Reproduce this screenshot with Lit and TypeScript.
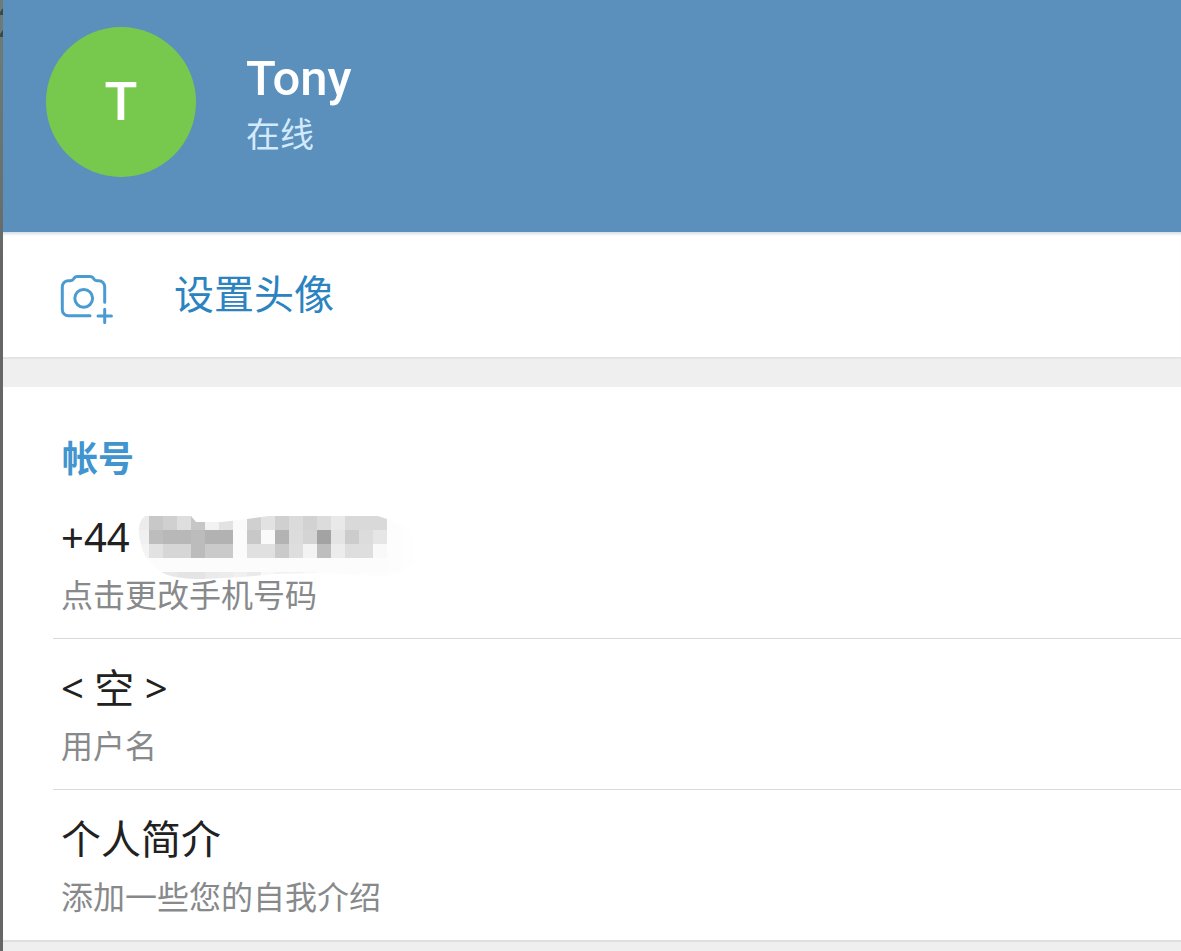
import { LitElement, html, css, svg } from "lit";
import { customElement, state } from "lit/decorators.js";

interface Entry {
  value: string;
  label: string;
  masked?: boolean;
}

const CELL = 14;

// Grey level of each mosaic cell, row by row; 255 is left blank.
const MOSAIC: number[][] = [
  [236, 200, 208, 222, 198, 242, 226, 250, 208, 226, 208, 219, 210, 220, 233, 217, 217, 217, 253, 254],
  [240, 189, 184, 184, 188, 178, 178, 251, 200, 250, 179, 220, 212, 163, 228, 204, 220, 230, 253, 254],
  [244, 226, 214, 214, 188, 202, 202, 251, 224, 224, 202, 222, 243, 190, 236, 222, 222, 249, 253, 254],
  [253, 252, 252, 252, 252, 252, 252, 252, 252, 252, 252, 252, 252, 252, 252, 252, 252, 252, 253, 254],
  [255, 236, 232, 228, 228, 234, 236, 240, 234, 248, 242, 242, 246, 252, 252, 252, 253, 253, 254, 255],
];

@customElement("app-root")
export class AppRoot extends LitElement {
  static styles = css`
    :host {
      display: flex;
      min-height: 100vh;
      background: #efefef;
      font-family: "Noto Sans", "Noto Sans CJK SC", sans-serif;
      color: #212121;
    }
    .edge {
      flex: none;
      width: 3px;
      background: linear-gradient(#6c7c7b, #67716e 200px, #666 260px);
    }
    .edge svg {
      display: block;
    }
    .page {
      flex: 1;
      min-width: 0;
    }
    button {
      display: block;
      width: 100%;
      margin: 0;
      border: 0;
      background: none;
      font: inherit;
      color: inherit;
      text-align: left;
      cursor: pointer;
    }
    .header {
      display: flex;
      align-items: flex-start;
      gap: 50px;
      padding: 27px 43px 55px;
      background: #5b8fbc;
      color: #fff;
    }
    .avatar {
      flex: none;
      display: grid;
      place-items: center;
      width: 150px;
      height: 150px;
      border-radius: 50%;
      background: #77c94d;
      font: 500 54px/64px Roboto, sans-serif;
    }
    .who {
      padding-top: 22px;
    }
    .name {
      margin: 0;
      font: 500 49px/60px Roboto, sans-serif;
    }
    .status {
      margin: 0;
      font-size: 34px;
      line-height: 50px;
      color: #d2eafc;
    }
    .card {
      background: #fff;
    }
    .action {
      border-bottom: 2px solid #e4e4e4;
      box-shadow: inset 0 4px 3px -2px #d3dde6;
    }
    .action button {
      display: flex;
      align-items: center;
      gap: 58px;
      padding: 32px 57px 33px;
      font-size: 40px;
      line-height: 60px;
      color: #2b83c0;
    }
    .camera {
      flex: none;
      width: 56px;
      height: 60px;
      fill: none;
      stroke: #4a9bd1;
      stroke-width: 3;
      stroke-linecap: round;
      stroke-linejoin: round;
    }
    .account {
      margin-top: 28px;
      padding-top: 44px;
      border-bottom: 2px solid #dfdfdf;
    }
    .title {
      margin: 0;
      padding-left: 59px;
      font-size: 36px;
      line-height: 56px;
      font-weight: 700;
      color: #4094cf;
    }
    .list {
      margin: 0;
      padding: 1px 0 0 50px;
      list-style: none;
    }
    .item + .item {
      border-top: 1px solid #d9d9d9;
    }
    .item button {
      padding: 21px 8px;
    }
    .value {
      display: flex;
      gap: 5px;
      font-size: 40px;
      line-height: 56px;
    }
    .label {
      display: block;
      margin-top: 8px;
      font-size: 32px;
      line-height: 44px;
      color: #87898b;
    }
    .mosaic {
      flex: none;
      width: 280px;
      height: 56px;
      overflow: visible;
    }
  `;

  @state() private entries: Entry[] = [
    { value: "+44", label: "点击更改手机号码", masked: true },
    { value: "< 空 >", label: "用户名" },
    { value: "个人简介", label: "添加一些您的自我介绍" },
  ];

  private mosaic() {
    return html`<svg class="mosaic" viewBox="0 -1 280 56" aria-hidden="true" shape-rendering="crispEdges">
      <clipPath id="brush">
        <path
          d="M10 6H56L61 12H86L112 9L134 6H243L252 9L272 18Q286 30 284 44Q280 60 252 66L182 63L140 64L108 67L68 69Q40 69 28 63Q8 50 6 34Q0 14 10 6Z"
        />
      </clipPath>
      <g clip-path="url(#brush)">
        ${MOSAIC.map((row, y) =>
          row.map(
            (g, x) =>
              svg`<rect x=${x * CELL} y=${6 + y * CELL} width=${CELL} height=${CELL} fill=${`rgb(${g},${g},${g})`}></rect>`
          )
        )}
      </g>
    </svg>`;
  }

  render() {
    return html`
      <div class="edge">
        <svg width="3" height="60" viewBox="0 0 3 60" aria-hidden="true">
          <path d="M3 8v7H0v-3zM3 30v7H0v-3z" fill="#3d4947" />
        </svg>
      </div>
      <main class="page">
        <header class="header">
          <div class="avatar" aria-hidden="true">T</div>
          <div class="who">
            <h1 class="name">Tony</h1>
            <p class="status">在线</p>
          </div>
        </header>
        <section class="card action">
          <button type="button">
            <svg class="camera" viewBox="0 -6 56 60" aria-hidden="true">
              <path
                d="M30 45.7H8.3a6 6 0 0 1-6-6V16.7a6 6 0 0 1 6-6h2.2c1.6 0 2.4-.6 3.2-1.9.9-1.6 2-2.2 3.8-2.2h12.4c1.8 0 2.9.6 3.8 2.2.8 1.3 1.6 1.9 3.2 1.9h1.8a6 6 0 0 1 6 6v15.5"
              />
              <circle cx="23.7" cy="28.3" r="8.9" />
              <path d="M44.7 39.2v13.4M38 45.9h13.4" />
            </svg>
            <span>设置头像</span>
          </button>
        </section>
        <section class="card account">
          <h2 class="title">帐号</h2>
          <ul class="list">
            ${this.entries.map(
              (e) => html`<li class="item">
                <button type="button">
                  <span class="value">${e.value}${e.masked ? this.mosaic() : null}</span>
                  <span class="label">${e.label}</span>
                </button>
              </li>`
            )}
          </ul>
        </section>
      </main>
    `;
  }
}
